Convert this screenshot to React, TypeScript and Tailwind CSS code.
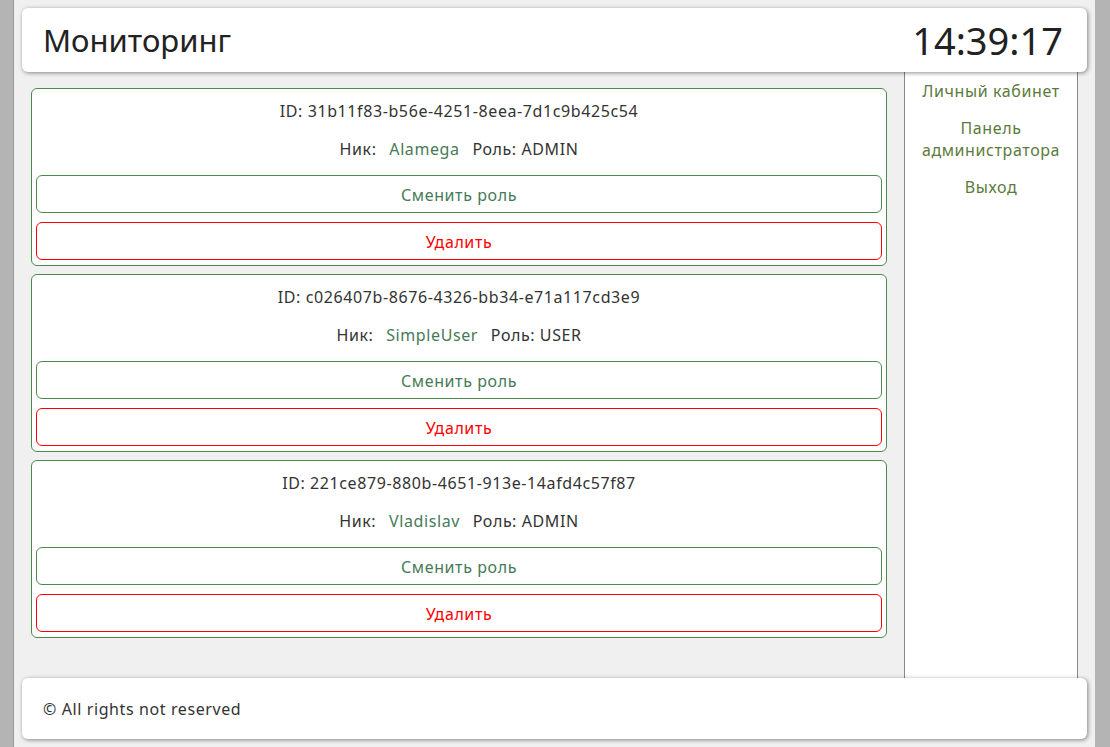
interface User {
  id: string;
  nick: string;
  role: string;
}

const users: User[] = [
  { id: "31b11f83-b56e-4251-8eea-7d1c9b425c54", nick: "Alamega", role: "ADMIN" },
  { id: "c026407b-8676-4326-bb34-e71a117cd3e9", nick: "SimpleUser", role: "USER" },
  { id: "221ce879-880b-4651-913e-14afd4c57f87", nick: "Vladislav", role: "ADMIN" },
];

function UserCard({ user }: { user: User }) {
  return (
    <div className="bg-white border border-[#4d8a4d] rounded-[6px] px-[4px] py-[5px] h-[178px] flex flex-col">
      <div className="mt-[5px] h-6 leading-6 text-center">ID: {user.id}</div>
      <div className="mt-[14px] h-6 leading-6 text-center">
        Ник: <span className="mx-2 text-[#477a57]">{user.nick}</span> Роль: {user.role}
      </div>
      <button className="mt-[14px] h-[38px] w-full rounded-[6px] border border-[#4d8a4d] bg-white text-[#477a57] tracking-[0.6px] pt-[1px]">
        Сменить роль
      </button>
      <button className="mt-[9px] h-[38px] w-full rounded-[6px] border border-[#ff0000] bg-white text-[#ff0000] tracking-[0.6px] pt-[1px]">
        Удалить
      </button>
    </div>
  );
}

export default function App() {
  return (
    <div className="h-screen bg-[#b4b4b4] overflow-hidden font-['Noto_Sans',sans-serif] text-[16px] text-[#333] tracking-[0.6px]">
      <div className="ml-[13px] w-[1082px] h-full bg-[#f0f0f0] border-l border-[#9a9a9a] flex flex-col">
        <header className="mx-2 mt-2 h-16 shrink-0 bg-white rounded-[6px] shadow-[1px_1px_4px_rgba(0,0,0,0.45)] flex items-center justify-between pl-[21px] pr-[24px] relative z-10 tracking-normal">
          <h1 className="text-[31px] text-[#222]">Мониторинг</h1>
          <div className="text-[38px] text-[#222]">14:39:17</div>
        </header>

        <div className="flex-1 flex min-h-0">
          <main className="flex-1 px-[17px] pt-4 flex flex-col gap-2">
            {users.map((u) => (
              <UserCard key={u.id} user={u} />
            ))}
          </main>
          <aside className="w-[174px] mr-[17px] bg-white border-x border-[#888] flex flex-col items-center pt-2 gap-[15px] text-center text-[#5b7b3b] leading-[22px]">
            <a href="#">Личный кабинет</a>
            <a href="#">Панель<br />администратора</a>
            <a href="#">Выход</a>
          </aside>
        </div>

        <footer className="mx-2 mb-2 h-[61px] shrink-0 bg-white rounded-[6px] shadow-[1px_1px_4px_rgba(0,0,0,0.45)] flex items-center pl-[21px] relative z-10">
          © All rights not reserved
        </footer>
      </div>
    </div>
  );
}
